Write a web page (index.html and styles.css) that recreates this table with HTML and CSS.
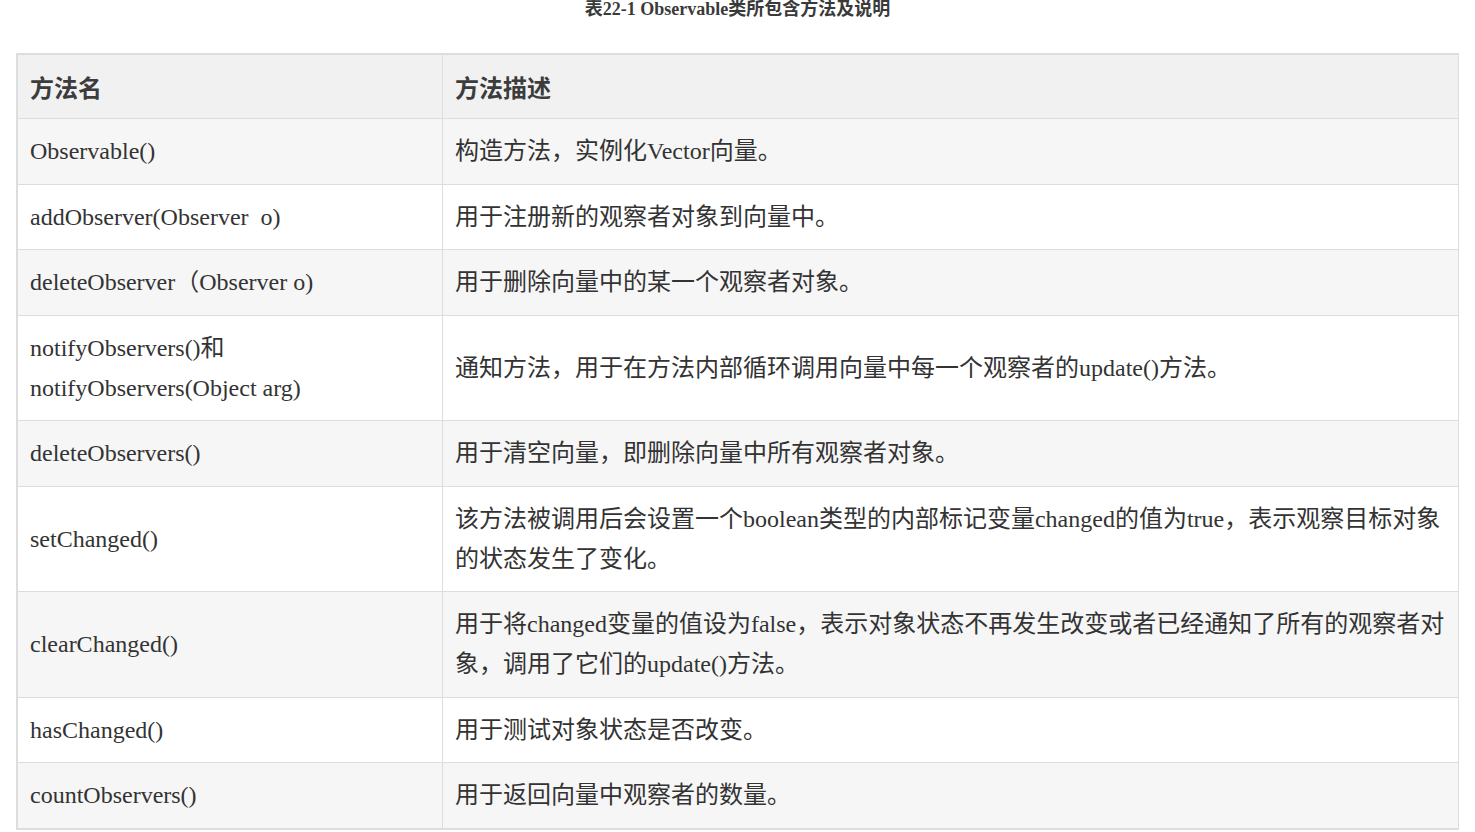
FILE: index.html
```html
<!DOCTYPE html>
<html lang="zh">
<head>
<meta charset="utf-8">
<title>Observable</title>
<link rel="stylesheet" href="styles.css">
</head>
<body>
<div class="page">
  <p class="caption">表22-1 Observable类所包含方法及说明</p>
  <table class="methods">
    <thead>
      <tr><th class="col-name">方法名</th><th>方法描述</th></tr>
    </thead>
    <tbody>
      <tr><td>Observable()</td><td>构造方法，实例化Vector向量。</td></tr>
      <tr><td>addObserver(Observer&nbsp; o)</td><td>用于注册新的观察者对象到向量中。</td></tr>
      <tr><td>deleteObserver（Observer o)</td><td>用于删除向量中的某一个观察者对象。</td></tr>
      <tr><td>notifyObservers()和<br>notifyObservers(Object arg)</td><td>通知方法，用于在方法内部循环调用向量中每一个观察者的update()方法。</td></tr>
      <tr><td>deleteObservers()</td><td>用于清空向量，即删除向量中所有观察者对象。</td></tr>
      <tr><td>setChanged()</td><td>该方法被调用后会设置一个boolean类型的内部标记变量changed的值为true，表示观察目标对象的状态发生了变化。</td></tr>
      <tr><td>clearChanged()</td><td>用于将changed变量的值设为false，表示对象状态不再发生改变或者已经通知了所有的观察者对象，调用了它们的update()方法。</td></tr>
      <tr><td>hasChanged()</td><td>用于测试对象状态是否改变。</td></tr>
      <tr><td>countObservers()</td><td>用于返回向量中观察者的数量。</td></tr>
    </tbody>
  </table>
</div>
</body>
</html>
```
FILE: styles.css
```css
html, body {
  margin: 0;
  padding: 0;
  background: #ffffff;
}

.page {
  padding: 0 16px;
  font-family: "Liberation Serif", "Noto Sans CJK SC", serif;
  color: #333333;
}

.caption {
  margin: -1px 0 34px 0;
  text-align: center;
  font-size: 18px;
  line-height: 20px;
  font-weight: bold;
  color: #3a3a3a;
}

.methods {
  width: 100%;
  border-collapse: collapse;
  border-top: 2px solid #dddddd;
  border-left: 2px solid #dddddd;
  border-bottom: 2px solid #dddddd;
  border-right: 1px solid #dddddd;
  font-size: 24px;
  line-height: 40px;
}

.methods th,
.methods td {
  border: 1px solid #dddddd;
  padding: 12px 12px 12.5px 12px;
  text-align: left;
  vertical-align: middle;
}

.methods th {
  background: #f1f1f1;
  font-family: "Noto Sans CJK SC", sans-serif;
  font-weight: bold;
  color: #3c3c3c;
  padding-top: 11.5px;
  padding-bottom: 11.5px;
}

.methods .col-name {
  width: 400px;
}

.methods tbody tr:nth-child(odd) td {
  background: #f6f6f6;
}

.methods tbody tr:nth-child(even) td {
  background: #ffffff;
}
```
